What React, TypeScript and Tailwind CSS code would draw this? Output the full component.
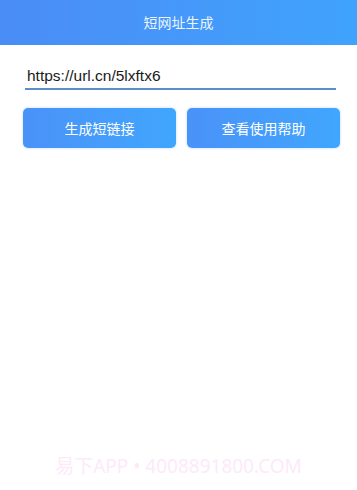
import React, { useState } from 'react';

const font = { fontFamily: '"Noto Sans", "Noto Sans CJK SC", sans-serif' };

export default function App() {
  const [url, setUrl] = useState('https://url.cn/5lxftx6');

  return (
    <div className="w-[357px] h-[490px] bg-white flex flex-col relative overflow-hidden" style={font}>
      {/* Header */}
      <div className="h-[45px] bg-gradient-to-r from-[#4a8cf6] to-[#3fa3fc] flex items-center justify-center">
        <span className="text-white/90 text-[14px]">短网址生成</span>
      </div>

      {/* Input */}
      <div className="px-[25px] pt-[18px]">
        <input
          value={url}
          onChange={e => setUrl(e.target.value)}
          className="w-[311px] h-[26px] px-[2px] text-[15.5px] text-[#1a1a1a] outline-none border-b-2 border-[#5b8fc9] bg-transparent"
          style={{ fontFamily: '"Liberation Sans", "Noto Sans CJK SC", sans-serif' }}
        />
      </div>

      {/* Buttons */}
      <div className="flex gap-[11px] pl-[23px] pt-[18px]">
        <button className="w-[153px] h-[40px] rounded-[5px] bg-gradient-to-r from-[#4a92f8] to-[#40a6fd] text-white text-[14px] shadow-[0_0_3px_rgba(64,150,250,0.35)]">
          生成短链接
        </button>
        <button className="w-[153px] h-[40px] rounded-[5px] bg-gradient-to-r from-[#4a92f8] to-[#40a6fd] text-white text-[14px] shadow-[0_0_3px_rgba(64,150,250,0.35)]">
          查看使用帮助
        </button>
      </div>

      {/* Watermark */}
      <div className="absolute left-0 right-0 top-[452px] text-center text-[19px] text-[#fdeaf8]" style={font}>
        易下APP • 4008891800.COM
      </div>
    </div>
  );
}
